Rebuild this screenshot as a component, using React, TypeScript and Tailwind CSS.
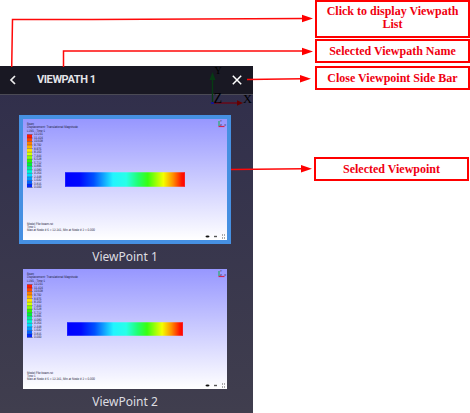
import React from "react";

const legend = [
  ["12.241", "#ff1a00"], ["11.424", "#ff4800"], ["10.608", "#ff8200"], ["9.792", "#ffb400"],
  ["8.976", "#ffe600"], ["8.160", "#d8ff00"], ["7.344", "#8cff00"], ["6.528", "#32f500"],
  ["5.712", "#00f03c"], ["4.896", "#00f08c"], ["4.080", "#00f5d2"], ["3.264", "#00dcff"],
  ["2.448", "#00a0ff"], ["1.632", "#0064ff"], ["0.816", "#0028ff"], ["0.000", ""],
];

type TinyTextProps = { x: number; y: number; width: number; size?: number; children: string };

function TinyText({ x, y, width, size = 3.6, children }: TinyTextProps) {
  return (
    <text
      transform={`translate(${x} ${y}) scale(0.25)`}
      fontSize={size * 4}
      textLength={width * 4}
      lengthAdjust="spacingAndGlyphs"
      textRendering="geometricPrecision"
    >
      {children}
    </text>
  );
}

type SceneProps = { id: string; height: number; beam: { x: number; y: number; w: number; h: number } };

function Scene({ id, height, beam }: SceneProps) {
  const step = 3.53;
  const foot = height - 121;
  return (
    <svg width="204" height={height} className="block font-['Liberation_Sans',sans-serif]" fill="#202038">
      <defs>
        <linearGradient id={`${id}-sky`} x1="0" y1="0" x2="0" y2="1">
          <stop offset="0" stopColor="#9797ff" />
          <stop offset="1" stopColor="#ffffff" />
        </linearGradient>
        <linearGradient id={`${id}-beam`}>
          <stop offset="0" stopColor="#0000ff" />
          <stop offset="0.12" stopColor="#0008ff" />
          <stop offset="0.24" stopColor="#0050ff" />
          <stop offset="0.4" stopColor="#22f4ff" />
          <stop offset="0.51" stopColor="#28ffe8" />
          <stop offset="0.61" stopColor="#20ff70" />
          <stop offset="0.69" stopColor="#38ff10" />
          <stop offset="0.82" stopColor="#f4ff00" />
          <stop offset="0.9" stopColor="#ff9000" />
          <stop offset="0.97" stopColor="#ff1800" />
          <stop offset="1" stopColor="#ff0000" />
        </linearGradient>
      </defs>
      <rect width="204" height={height} fill={`url(#${id}-sky)`} />
      <TinyText x={4} y={6} width={7}>Beam</TinyText>
      <TinyText x={4} y={9.4} width={51}>Displacement: Translational Magnitude</TinyText>
      <TinyText x={4} y={12.8} width={18}>L1M1 - Time:1</TinyText>
      {legend.map(([value, color], i) => (
        <g key={value}>
          {color && <rect x="4" y={15.5 + i * step} width="5" height={step} fill={color} />}
          <path d={`M4 ${15.5 + i * step}h6`} stroke="#30304c" strokeWidth="0.35" />
          <TinyText x={11} y={16.4 + i * step} width={value.length > 5 ? 9 : 7.5}>{value}</TinyText>
        </g>
      ))}
      <rect x={beam.x} y={beam.y} width={beam.w} height={beam.h} fill={`url(#${id}-beam)`} />
      <rect x={beam.x} y={beam.y + 0.5} width={beam.w} height={beam.h - 1} fill="none" stroke="#d0d0ff" strokeOpacity="0.25" />
      <TinyText x={4} y={105.5 + foot} width={26}>Model File:beam.rst</TinyText>
      <TinyText x={4} y={109 + foot} width={8.5}>Time:1</TinyText>
      <TinyText x={4} y={112 + foot} width={68}>Max at Node # 6 = 12.241, Min at Node # 2 = 0.000</TinyText>
      <path d="M196 7V2" stroke="#10b050" strokeWidth="1" />
      <path d="M195.5 7.5h6" stroke="#d02850" strokeWidth="1.2" />
      <TinyText x={197} y={2.6} width={1.8} size={2.8}>Y</TinyText>
      <TinyText x={197} y={6.6} width={1.8} size={2.8}>Z</TinyText>
      <TinyText x={201.2} y={7.4} width={1.8} size={2.8}>X</TinyText>
      <g transform={`translate(0 ${foot})`}>
        <ellipse cx="184.5" cy="117.5" rx="2" ry="1.1" fill="#111" />
        <path d="M191 117.5h3" stroke="#555" strokeWidth="1.4" />
        <path d="M199 116h1m1 0h1m-3 3h1m1 0h1" stroke="#555" strokeWidth="1" />
      </g>
    </svg>
  );
}

function Callout({ children, className }: { children: React.ReactNode; className: string }) {
  return (
    <div className={`flex w-[155px] shrink-0 justify-center border-2 border-[#ff0000] text-center font-['Liberation_Serif',serif] text-[12px] leading-[13px] font-bold text-[#f00010] ${className}`}>
      {children}
    </div>
  );
}

function AxisTriad() {
  return (
    <svg width="44" height="42" className="absolute top-0 left-[209px] font-['Liberation_Serif',serif]" fill="#000000" fontSize="14">
      <path d="M3.5 37V12" stroke="#063b13" strokeWidth="1.4" />
      <path d="m3.5 6 3 8h-6Z" fill="#063b13" />
      <path d="M4 37h26" stroke="#650b1b" strokeWidth="1.6" />
      <path d="m34 37-6-2.7v5.4Z" fill="#650000" />
      <path d="M2 36h3v2H2Z" fill="#171790" />
      <text x="5.5" y="7.5" fontSize="10">Y</text>
      <text x="4.5" y="37">Z</text>
      <text x="34" y="37" fontSize="12.5">X</text>
    </svg>
  );
}

function Connectors() {
  return (
    <svg width="470" height="413" className="pointer-events-none absolute inset-0" fill="none" stroke="#ff0808" strokeWidth="1.5">
      <path d="M11.7 67 12.5 19.5 92 19.5 304 18.5" />
      <path d="M63.5 67V51H303" />
      <path d="M247 79.4 302 78.8" />
      <path d="M231 169.4 303 168.8" />
      <g fill="#ff0000" stroke="none">
        <path d="m313 18.5-11-3.7v7.4Z" />
        <path d="m313 51.5-11-3.7v7.4Z" />
        <path d="m311 78.7-11-3.7v7.4Z" />
        <path d="m312 168.7-11-3.7v7.4Z" />
      </g>
    </svg>
  );
}

export default function App() {
  return (
    <main className="relative flex h-[413px] w-[470px] overflow-hidden bg-white">
      <aside className="relative mt-[66px] flex w-[253px] shrink-0 flex-col bg-linear-to-b from-[#302e4b] to-[#403e4e] font-['Noto_Sans',sans-serif] text-[#dddde1]">
        <header className="flex h-[29px] shrink-0 items-center border-b border-[#4b4a55] bg-[#191823]">
          <svg width="8" height="10" className="ml-[9px]" fill="none" stroke="#eeeeee" strokeWidth="1.7">
            <path d="M6 1 2 5l4 4" />
          </svg>
          <h1 className="ml-5 font-['Roboto',sans-serif] text-[11px] leading-4 font-bold tracking-[-0.4px] whitespace-nowrap text-[#e4e4e8]">VIEWPATH 1</h1>
          <svg width="10" height="10" className="mr-[11px] ml-auto" fill="none" stroke="#ffffff" strokeWidth="1.5">
            <path d="m.8.8 8.4 8.4m0-8.4L.8 9.2" />
          </svg>
        </header>
        <section className="mt-5 ml-[19px] flex w-[212px] flex-col items-center">
          <div className="border-4 border-[#4690e2]">
            <Scene id="first" height={121} beam={{ x: 42, y: 53, w: 120, h: 15 }} />
          </div>
          <p className="flex h-[25px] items-center text-[12px] leading-4">ViewPoint 1</p>
          <Scene id="second" height={120} beam={{ x: 44, y: 53, w: 116, h: 14 }} />
          <p className="flex h-6 items-center pt-px text-[12px] leading-4">ViewPoint 2</p>
        </section>
        <AxisTriad />
      </aside>
      <section className="ml-[62px] flex flex-col">
        <Callout className="h-[38px] pt-[3px]"><span>Click to display Viewpath<br />List</span></Callout>
        <Callout className="mt-px h-6 items-center pt-px">Selected Viewpath Name</Callout>
        <Callout className="mt-[3px] h-6 items-center pt-px">Close Viewpoint Side Bar</Callout>
        <Callout className="mt-[67px] -ml-px h-6 items-center pt-px">Selected Viewpoint</Callout>
      </section>
      <Connectors />
    </main>
  );
}
